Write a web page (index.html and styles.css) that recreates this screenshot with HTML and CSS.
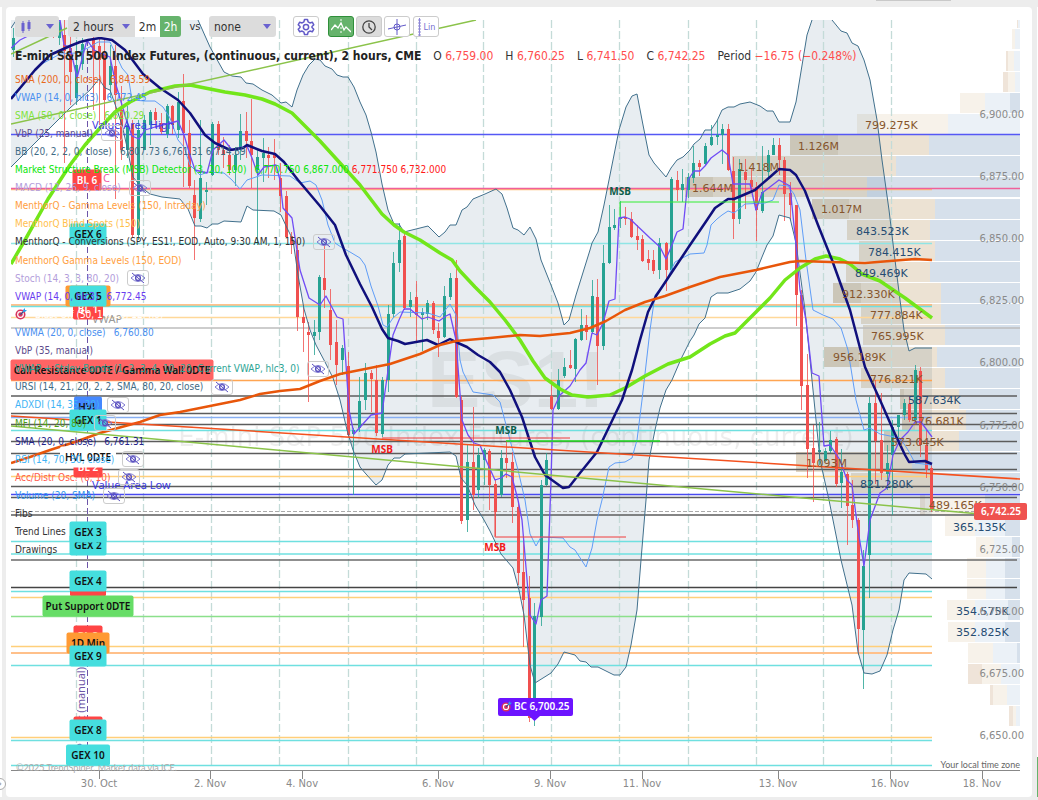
FILE: index.html
```
<!doctype html>
<html lang="en">
<head>
    <meta charset="utf-8" />
    <title>ES1! 2 hours</title>
    <link rel="stylesheet" href="styles.css">
    <script src="chart.js" defer></script>
</head>

<body>
    <svg class="defs" width="0" height="0" aria-hidden="true">
        <symbol id="eye-off" viewBox="0 0 16 12">
            <path d="M1 6Q8-1 15 6Q8 13 1 6Z" fill="none" stroke="#7d77cf" />
            <circle cx="8" cy="6" r="2.4" fill="none" stroke="#5a50c0" stroke-width="1.4" />
            <path d="M2 1L14 11" stroke="#5a50c0" />
        </symbol>
        <symbol id="target" viewBox="0 0 12 12">
            <circle cx="5.5" cy="6.5" r="5" fill="#d8345f" />
            <circle cx="5.5" cy="6.5" r="3.4" fill="#fff" />
            <circle cx="5.5" cy="6.5" r="2.2" fill="#d8345f" />
            <path d="M5.500 6.500L9 3" stroke="#33508a" stroke-width="1.200" />
            <path d="M8 4V2L10 0V2H12L10 4Z" fill="#2f9be8" />
        </symbol>
    </svg>

    <aside class="side side-left"><button class="expand" aria-label="Expand">›</button></aside>

    <main class="panel">
        <svg id="chart" class="chart" viewBox="6 7 1026 790" role="img" aria-label="ES1! price chart">
            <defs>
                <clipPath id="plot"><rect x="11" y="20" width="1009" height="750" /></clipPath>
            </defs>
        </svg>

        <div class="overlay">
            <div class="toolbar">
                <button class="gray style-btn" aria-label="Chart style">
                    <svg width="12" height="14" viewBox="0 0 12 14"><path d="M3 1V13M9 0V11" stroke="#6a62d0" /><path d="M3 3V11M9 2V9" stroke="#6a62d0" stroke-width="3" /></svg>
                    <span class="caret"></span>
                </button>
                <span class="pick pick-period">
                    <select aria-label="Period"><option>2 hours</option></select>
                    <span class="caret"></span>
                </span>
                <button class="quick">2m</button>
                <button class="quick on">2h</button>
                <label class="vs" for="versus">vs</label>
                <span class="pick pick-vs">
                    <select id="versus"><option>none</option></select>
                    <span class="caret"></span>
                </span>
                <button class="tool tool-gear" aria-label="Settings">
                    <svg width="18" height="18" viewBox="0 0 24 24" fill="none" stroke="#625ac8" stroke-width="2" stroke-linejoin="round"><path d="M10 2h4l.8 3.200 2.400 1.400 3.200-1 2 3.500-2.400 2.300v1.200l2.400 2.300-2 3.500-3.200-1-2.400 1.400L14 22h-4l-.8-3.200-2.400-1.400-3.200 1-2-3.500L4 12.600v-1.200L1.600 9.100l2-3.500 3.200 1 2.400-1.400Z" /><circle cx="12" cy="12" r="3.500" /></svg>
                </button>
                <button class="tool tool-wave" aria-label="Extended hours">
                    <svg width="20" height="18" viewBox="0 0 20 18" fill="none" stroke="#fff"><path d="M0 12L4 7L7 10L10 5L13 12L15 9L20 14" stroke-width="1.300" /><path d="M10 1V17" stroke-dasharray="2 2" /></svg>
                </button>
                <button class="tool tool-clock" aria-label="Time">
                    <svg width="16" height="16" viewBox="0 0 16 16" fill="none" stroke="#444" stroke-width="1.300"><circle cx="8" cy="8" r="6.200" /><path d="M8 4V8L11 11" /></svg>
                </button>
                <button class="tool tool-cross" aria-label="Crosshair">
                    <svg width="20" height="18" viewBox="0 0 20 18" fill="none" stroke="#625ac8"><path d="M10 1V17M1 11L19 7" /><circle cx="10" cy="9" r="3" /></svg>
                </button>
                <button class="tool tool-lin">
                    <svg width="5" height="18" viewBox="0 0 5 18" stroke="#8d87d6"><path d="M2.500 0V18M1 2H4M1 5H4M1 8H4M1 11H4M1 14H4M1 17H4" /></svg>Lin
                </button>
            </div>

            <h1 class="title">
                <b>E-mini S&amp;P 500 Index Futures, (continuous, current), 2 hours, CME</b>
                <span>O <i>6,759.00</i></span>
                <span>H <i>6,760.25</i></span>
                <span>L <i>6,741.50</i></span>
                <span>C <i>6,742.25</i></span>
                <span>Period <i>−16.75 (−0.248%)</i></span>
            </h1>

            <ul class="legend">
                <li class="c-rust">SMA (200, 0, close) <span>6,843.59</span></li>
                <li class="c-blue">VWAP (14, 0, hlc3) <span>6,772.45</span></li>
                <li class="c-lime">SMA (50, 0, close) <span>6,820.29</span></li>
                <li class="c-plum">VbP (25, manual) <button aria-label="Show"><svg><use href="#eye-off" /></svg></button></li>
                <li class="c-steel">BB (20, 2, 2, 0, close) <span>6,807.73 6,761.31 6,714.89</span></li>
                <li class="c-green">Market Structure Break (MSB) Detector (3, 20, 100) <span>6,770.750 6,867.000 <em>6,771.750 6,732.000</em></span></li>
                <li class="c-lilac">MACD (12, 26, 9, close) <button aria-label="Show"><svg><use href="#eye-off" /></svg></button></li>
                <li class="c-orange">MenthorQ - Gamma Levels (150, Intraday)</li>
                <li class="c-amber">MenthorQ Blind Spots (150)</li>
                <li>MenthorQ - Conversions (SPY, ES1!, EOD, Auto, 9:30 AM, 1, 150) <button aria-label="Show"><svg><use href="#eye-off" /></svg></button></li>
                <li class="c-orange">MenthorQ Gamma Levels (150, EOD)</li>
                <li class="c-lilac">Stoch (14, 3, 3, 80, 20) <button aria-label="Show"><svg><use href="#eye-off" /></svg></button></li>
                <li class="c-violet">VWAP (14, 0, hlc3) <span>6,772.45</span></li>
                <li class="c-white"><svg class="target"><use href="#target" /></svg> Blast Off (50, 14, 20, 12, no)</li>
                <li class="c-blue">VWMA (20, 0, close) <span>6,760.80</span></li>
                <li class="c-plum">VbP (35, manual)</li>
                <li class="c-teal">VWAP + Stdev Bands (1, 2, 3, 4, 10, 20, Current VWAP, hlc3, 0) <button aria-label="Show"><svg><use href="#eye-off" /></svg></button></li>
                <li class="c-steel">URSI (14, 21, 20, 2, 2, SMA, 80, 20, close) <button aria-label="Show"><svg><use href="#eye-off" /></svg></button></li>
                <li class="c-sky">ADXDI (14, 35, 20) <button aria-label="Show"><svg><use href="#eye-off" /></svg></button></li>
                <li class="c-moss">MFI (14, 20, 80) <button aria-label="Show"><svg><use href="#eye-off" /></svg></button></li>
                <li class="c-navy">SMA (20, 0, close) <span>6,761.31</span></li>
                <li class="c-sky">RSI (14, 70, 30, close) <button aria-label="Show"><svg><use href="#eye-off" /></svg></button></li>
                <li class="c-coral">Acc/Distr Osc. (6, 10) <button aria-label="Show"><svg><use href="#eye-off" /></svg></button></li>
                <li class="c-azure">Volume (20, SMA) <button aria-label="Show"><svg><use href="#eye-off" /></svg></button></li>
                <li>Fibs</li>
                <li>Trend Lines</li>
                <li>Drawings</li>
            </ul>
        </div>
    </main>

    <aside class="side side-right"></aside>
</body>

</html>
```

FILE: styles.css
```
* {
    box-sizing: border-box;
}
body {
    margin: 0;
    padding: 7px 0 3px;
    min-height: 100vh;
    display: flex;
    align-items: stretch;
    background: linear-gradient(#c9c9c9, #c9c9c9) 91% 0 / 75px 1px no-repeat #ededed;
    color: #333;
    font-family: "DejaVu Sans Condensed", "Noto Sans", sans-serif;
    font-size: 11px;
}
button, select {
    font: inherit;
    color: inherit;
    margin: 0;
    padding: 0;
    border: 0;
}
.defs {
    position: absolute;
}

.side {
    background: #fff;
}
.side-left {
    width: 2px;
    margin-right: 4px;
    display: flex;
    align-items: flex-end;
    justify-content: flex-end;
}
.side-right {
    width: 1px;
    margin-left: 5px;
    background: linear-gradient(#fff 95%, #66b36c 95%);
}
.expand {
    flex: none;
    width: 12px;
    height: 12px;
    margin: 0 -4px 7px 0;
    border: 1px solid #aaa;
    border-radius: 50%;
    background: #fff;
    color: #888;
    line-height: 8px;
}

.panel {
    flex: 1;
    min-width: 0;
    display: grid;
    align-items: start;
    background: #fff;
    border-radius: 4px;
}
.chart, .overlay {
    grid-area: 1 / 1;
    min-width: 0;
}
.chart {
    display: block;
    width: 100%;
}
.overlay {
    padding: 9px 9px 0;
}

/* toolbar */
.toolbar {
    display: flex;
    align-items: center;
    height: 21px;
    font-size: 12px;
}
.toolbar button, .pick {
    height: 21px;
    border-radius: 3px;
}
.toolbar .gray, .pick {
    display: flex;
    align-items: center;
    justify-content: space-between;
    background: #dcdcdc;
    padding: 0 5px;
}
.style-btn {
    width: 44px;
    margin-right: 9px;
}
.caret {
    border: 4px solid transparent;
    border-top: 5px solid #6a62d0;
    border-bottom: 0;
    pointer-events: none;
}
.pick select {
    appearance: none;
    background: none;
    flex: 1;
    min-width: 0;
    outline: 0;
}
.pick-period {
    width: 67px;
    border-radius: 3px 0 0 3px;
}
.pick-vs {
    width: 67px;
    margin-right: 17px;
}
.toolbar .quick {
    width: 25px;
    background: #fff;
    border-radius: 0;
}
.toolbar .quick.on {
    width: 21px;
    background: #66b36c;
    border-radius: 0 3px 3px 0;
    color: #fff;
}
.vs {
    width: 28px;
    text-align: center;
    font-size: 11px;
}
.tool {
    display: flex;
    align-items: center;
    justify-content: center;
    width: 26px;
    margin-right: 2px;
    background: #fff;
}
.toolbar .tool {
    border: 1px solid #ccc;
}
.tool-gear {
    margin-right: 9px;
}
.tool-cross {
    margin-right: 3px;
}
.toolbar .tool-wave {
    background: #66b36c;
    border-color: #2f8f3a;
}
.toolbar .tool-clock {
    background: #dcdcdc;
}
.toolbar .tool-lin {
    gap: 2px;
    color: #7770d0;
    font-size: 9px;
}

/* symbol and last bar */
.title {
    display: flex;
    gap: 12px;
    margin: 11px 0 6px;
    font-size: 12px;
    font-weight: 400;
    line-height: 16px;
    white-space: nowrap;
}
.title i {
    color: #ff4d4d;
    font-style: normal;
}
.title b {
    color: #222;
}

/* indicators */
.legend {
    display: flex;
    flex-direction: column;
    justify-content: space-between;
    min-height: 489px;
    margin: 0;
    padding: 0;
    list-style: none;
    font-size: 10px;
    white-space: nowrap;
}
.legend li {
    display: flex;
    align-items: center;
    gap: 8px;
    height: 18px;
}
.legend button {
    display: flex;
    align-items: center;
    justify-content: center;
    width: 22px;
    height: 16px;
    border: 1px solid #ccc;
    border-radius: 3px;
    background: none;
}
.legend button svg {
    width: 16px;
    height: 12px;
}
.legend .target {
    width: 12px;
    height: 12px;
}
.legend em {
    color: #ff1a1a;
    font-style: normal;
}
.c-rust { color: #e8691b; }
.c-blue { color: #4a8ff0; }
.c-lime { color: #7fe33a; }
.c-plum { color: #5d4b8c; }
.c-steel { color: #3f6b85; }
.c-green { color: #0be60b; }
.c-lilac { color: #b39ddb; }
.c-orange { color: #ff9e40; }
.c-amber { color: #ffc04d; }
.c-violet { color: #6a3cf0; }
.c-white { color: #fff; }
.c-teal { color: #2ba494; }
.c-sky { color: #3fb4f5; }
.c-moss { color: #4f9e12; }
.c-navy { color: #23238a; }
.c-coral { color: #ff5c4d; }
.c-azure { color: #2f95ee; }

/* chart text */
.chart text {
    font-family: "Noto Sans", sans-serif;
    font-size: 11px;
}
.chart .axis {
    font-family: "DejaVu Sans", sans-serif;
    font-size: 10px;
    fill: #8a8a8a;
}
.chart .volume {
    font-family: "DejaVu Sans", sans-serif;
}
.chart .credit {
    font-family: Lato, sans-serif;
    font-size: 9px;
    fill: #aaa;
}
.chart .zone {
    font-family: Lato, sans-serif;
    font-size: 9px;
    fill: #666;
}
.chart .badge {
    font-size: 10px;
    font-weight: 600;
}
.chart .msb {
    font-size: 10px;
    font-weight: 700;
}
.chart .mark-symbol {
    font-family: "Liberation Sans", sans-serif;
    font-size: 80px;
    font-weight: 700;
    fill: #000;
    fill-opacity: .06;
}
.chart .mark-name {
    font-family: "DejaVu Sans", sans-serif;
    font-size: 26px;
    fill: #000;
    fill-opacity: .07;
}
.band {
    fill: #e8edf1;
    mix-blend-mode: multiply;
}
```

FILE: chart.js
```
const svg = document.getElementById('chart');

function add(tag, attrs, parent, text) {
    const el = document.createElementNS('http://www.w3.org/2000/svg', tag);
    for (const k in attrs) el.setAttribute(k, attrs[k]);
    if (text !== undefined) el.textContent = text;
    (parent || svg).appendChild(el);
    return el;
}
const plot = add('g', { 'clip-path': 'url(#plot)' });

// volume by price: left, end of dark tan, tan/blue split, start of dark blue
const bins = [
    [1017, 1018, 1018, 1020], [1012, 1012, 1015, 1020], [1006, 1008, 1014, 1020], [1003, 1008, 1015, 1020],
    [960, 960, 985, 1010], [857, 857, 948, 1020], [790, 838, 929, 929], [732, 732, 896, 896],
    [685, 713, 867, 867], [812, 849, 935, 935], [847, 847, 930, 930], [859, 859, 935, 935],
    [846, 846, 930, 930], [833, 861, 941, 941], [861, 861, 941, 941], [863, 863, 945, 945],
    [824, 859, 937, 937], [861, 861, 945, 945], [900, 904, 959, 959], [902, 915, 966, 966],
    [884, 890, 959, 959], [796, 812, 912, 912], [851, 851, 932, 932], [920, 925, 985, 985],
    [945, 945, 975, 1005], [976, 976, 994, 1012], [967, 967, 986, 1005], [967, 967, 986, 1005],
    [947, 947, 975, 1008], [948, 948, 975, 1005], [968, 968, 993, 1017], [968, 982, 1001, 1020],
    [990, 993, 1007, 1020], [1009, 1013, 1016, 1020]
];
bins.forEach(([left, dark, split, blue], i) => {
    const y = Math.round(8.2 + 21.15 * i);
    const busy = i > 5 && i < 23;
    const bar = (x1, x2, fill) => x2 > x1 && add('rect', { x: x1, y, width: x2 - x1, height: 20, fill }, plot);
    bar(left, split, busy ? '#ece2d3' : '#f7f2ea');
    bar(left, dark, busy ? '#e0d5c3' : '#efe4d9');
    bar(split, blue, '#ebf1f7');
    bar(blue, 1020, '#d6e0eb');
});

const upper = '198,5 198,20 210,47 224,72 232,76 241,77 246,83 253,84 262,90 272,95 281,103 286,102 292,107 297,90 303,75 309,65 315,59 320,60 325,66 332,69 337,75 343,77 348,77 354,87 360,102 366,115 371,132 376,152 382,184 388,210 394,224 399,224 404,232 428,226 439,237 445,232 450,225 456,225 462,210 467,207 473,199 485,194 496,189 502,194 507,208 513,228 518,230 524,235 530,227 536,239 541,260 547,275 551,285 558,303 564,325 569,320 576,295 590,250 592,243 598,232 604,205 611,170 619,130 626,107 632,96 637,94 643,125 649,155 654,163 666,177 671,168 677,160 683,157 690,150 694,144 700,139 705,130 711,130 717,121 722,110 728,107 734,107 740,104 750,102 760,106 767,111 773,111 779,122 790,122 796,102 807,35 812,20 814,5 828,5 832,20 841,31 847,33 852,43 858,46 864,60 870,80 877,120 882,160 889,210 895,260 900,300 904,330 909,351 915,348 932,348';
const lower = '11,167 30,148 45,133 70,108 90,90 99,79 105,88 110,90 116,107 122,125 127,147 133,177 142,188 150,194 162,197 180,199 188,209 195,226 201,226 207,228 212,224 218,224 224,221 241,222 247,206 253,210 274,211 281,215 287,228 293,240 298,275 304,309 310,330 316,345 325,362 333,378 340,400 347,430 353,450 360,467 366,474 376,485 382,480 388,465 394,458 400,458 405,454 450,452 456,456 461,478 467,485 475,505 484,520 490,531 501,554 513,568 519,590 524,615 530,665 535,683 551,673 558,664 564,652 575,655 580,661 586,662 591,667 598,667 614,675 620,675 626,667 631,645 637,610 641,560 646,500 649,460 655,430 660,408 666,390 672,380 681,359 690,341 694,335 699,324 705,318 711,297 717,293 728,293 740,289 750,281 756,272 762,257 767,245 773,236 779,215 790,218 796,243 805,310 812,380 820,460 829,500 841,560 852,605 858,652 864,673 872,674 880,671 887,655 893,630 899,610 904,580 909,573 926,574 932,579';
add('polygon', { class: 'band', points: lower + ' ' + upper.split(' ').reverse().join(' ') + ' 11,5' }, plot);

add('text', { class: 'mark-symbol', x: 516, y: 407, 'text-anchor': 'middle' }, plot, 'ES1!');
add('text', { class: 'mark-name', x: 516, y: 446, 'text-anchor': 'middle' }, plot, 'E-mini S&P 500 Index Futures, (continuous, current)');

// session breaks
for (const x of [76, 143, 211, 279, 348, 416, 483, 551, 619, 688, 756, 823, 891]) {
    add('path', { d: `M${x + .5} 20V768`, stroke: '#c4dbd8', 'stroke-width': 1.3, 'stroke-dasharray': '8 3' }, plot);
}
add('path', { d: 'M87.5 40V768', stroke: '#6d55a8', 'stroke-dasharray': '6 3' }, plot);

// horizontal levels: y, colour, right end, width
const dark = '#5c5c5c', cyan = '#6fe0e0', sand = '#ffcf7a';
const levels = [
    [134.5, '#5558f5', 1020], [189.5, '#ffbe78', 932], [188.5, '#f0609a', 1020], [243.5, '#8fe5e5', 932], [305, '#ffae66', 932],
    [306.5, cyan, 932], [317.5, '#ffd899', 932], [328, '#bdbdbd', 1020], [380.5, '#ffa552', 932],
    [396, dark, 1017], [413.5, dark, 1017], [417.5, '#86aef2', 932], [424.5, dark, 1017], [430.5, cyan, 932],
    [441.5, dark, 1017], [453.5, dark, 1017], [469.5, dark, 1017], [476.5, sand, 932], [486.5, dark, 1017],
    [494.5, '#4a4af0', 1020], [497.5, dark, 1017], [515, dark, 1017], [541.5, cyan, 932], [554, cyan, 932],
    [560, '#6a6a6a', 1017], [587.5, '#444', 1017], [591.5, cyan, 932], [597.5, sand, 932], [616.5, '#8be08b', 932],
    [646.5, sand, 932], [653, '#ffc08a', 932, 2], [665.5, cyan, 932], [737.5, sand, 932], [740.5, cyan, 932], [765.5, cyan, 932]
];
for (const [y, stroke, x2, w] of levels) {
    add('path', { d: `M11 ${y}H${x2}`, stroke, 'stroke-width': w || 1.3 }, plot);
}
add('path', { d: 'M11 511.5H980', stroke: '#aaa', 'stroke-dasharray': '4 2' }, plot);

// candles: x, high, body top, body bottom, low, up
const candles = [
    [13, 28, 38, 50, 57, 1], [53, 20, 24, 35, 38, 0], [59, 20, 22, 38, 45, 1], [64, 20, 35, 51, 163, 0], [70, 30, 48, 72, 105, 0],
    [76, 40, 65, 98, 105, 1], [82, 38, 44, 64, 70, 1], [93, 32, 40, 57, 110, 0], [99, 38, 46, 60, 125, 0],
    [104, 40, 55, 100, 120, 0], [110, 45, 66, 85, 98, 1], [115, 45, 66, 95, 199, 0], [121, 86, 110, 150, 160, 0],
    [127, 106, 125, 150, 158, 1], [132, 120, 124, 235, 238, 0], [138, 120, 130, 235, 240, 1], [144, 115, 120, 150, 150, 1],
    [150, 110, 112, 125, 145, 1], [155, 108, 112, 120, 128, 0], [161, 113, 123, 132, 134, 0], [167, 104, 106, 134, 138, 1],
    [172, 105, 106, 125, 134, 0], [178, 92, 102, 130, 138, 1], [183, 74, 101, 133, 187, 0], [189, 120, 133, 186, 188, 0],
    [194, 180, 195, 218, 260, 0], [200, 120, 178, 219, 222, 1], [206, 182, 190, 192, 205, 1], [212, 122, 124, 175, 176, 1],
    [218, 121, 124, 150, 155, 0], [223, 137, 150, 155, 168, 0], [229, 145, 155, 170, 175, 0], [235, 147, 155, 170, 186, 1],
    [240, 114, 131, 148, 160, 1], [246, 112, 131, 141, 158, 0], [251, 99, 141, 155, 188, 0], [257, 150, 157, 170, 245, 1],
    [263, 138, 153, 158, 182, 1], [268, 147, 155, 158, 178, 0], [274, 139, 153, 158, 180, 0], [280, 163, 178, 196, 212, 0],
    [286, 191, 196, 237, 238, 0], [291, 232, 236, 245, 254, 0], [297, 240, 250, 317, 331, 0], [303, 305, 317, 323, 352, 0],
    [308, 322, 332, 335, 402, 0], [314, 320, 332, 336, 355, 1], [319, 275, 277, 332, 340, 1], [324, 246, 278, 290, 308, 0],
    [330, 289, 310, 345, 360, 0], [336, 320, 342, 365, 385, 0], [342, 345, 348, 360, 375, 1], [348, 352, 366, 435, 437, 0],
    [353, 428, 430, 434, 495, 1], [359, 377, 401, 428, 432, 1], [365, 363, 373, 400, 410, 1], [371, 370, 373, 379, 412, 0],
    [376, 365, 380, 433, 436, 0], [382, 377, 380, 434, 437, 1], [388, 305, 314, 380, 392, 1], [393, 252, 263, 314, 318, 1],
    [399, 223, 240, 263, 272, 1], [404, 232, 236, 308, 310, 0], [410, 292, 300, 307, 317, 1], [416, 281, 297, 315, 342, 0],
    [422, 308, 312, 315, 351, 1], [427, 300, 303, 314, 320, 1], [433, 301, 303, 330, 334, 0], [438, 323, 331, 338, 357, 0],
    [444, 286, 296, 337, 338, 1], [450, 273, 278, 297, 300, 1], [456, 260, 278, 397, 398, 0], [461, 396, 400, 521, 524, 0],
    [467, 445, 462, 520, 532, 1], [473, 407, 462, 495, 510, 0], [478, 448, 455, 490, 498, 1], [484, 448, 450, 460, 485, 1],
    [489, 449, 451, 485, 510, 0], [495, 480, 484, 512, 536, 0], [501, 450, 458, 495, 497, 1], [506, 441, 458, 463, 478, 0],
    [512, 452, 462, 507, 523, 0], [518, 503, 507, 573, 585, 0], [523, 540, 572, 600, 647, 0], [529, 576, 598, 718, 722, 0],
    [534, 603, 616, 715, 726, 1], [541, 480, 485, 617, 626, 1], [546, 453, 460, 485, 486, 1], [551, 380, 396, 409, 410, 0],
    [558, 369, 380, 409, 410, 1], [564, 358, 367, 376, 378, 1], [570, 350, 365, 368, 369, 0], [575, 338, 339, 369, 382, 1],
    [581, 309, 325, 340, 341, 1], [586, 315, 325, 332, 340, 0], [592, 280, 296, 332, 333, 1], [597, 279, 297, 346, 385, 0],
    [603, 245, 263, 346, 350, 1], [609, 205, 227, 263, 264, 1], [614, 209, 225, 228, 230, 1], [620, 201, 217, 219, 228, 1],
    [625, 207, 217, 219, 225, 0], [631, 212, 219, 237, 238, 0], [637, 225, 236, 240, 250, 0], [642, 235, 239, 261, 262, 0],
    [648, 250, 259, 263, 270, 0], [653, 250, 260, 271, 274, 0], [659, 238, 243, 270, 279, 1], [666, 242, 243, 270, 291, 0],
    [671, 177, 179, 270, 272, 1], [677, 171, 180, 190, 201, 0], [682, 169, 184, 190, 202, 1], [688, 173, 177, 190, 198, 1],
    [693, 146, 163, 178, 183, 1], [699, 160, 163, 167, 176, 0], [705, 143, 146, 164, 165, 1], [711, 125, 137, 145, 146, 1],
    [717, 120, 135, 137, 145, 1], [722, 124, 129, 135, 164, 1], [728, 124, 129, 170, 171, 0], [733, 157, 171, 219, 239, 0],
    [739, 159, 169, 219, 224, 1], [745, 159, 172, 180, 209, 0], [751, 168, 180, 187, 190, 0], [756, 182, 187, 210, 241, 0],
    [762, 146, 192, 211, 213, 1], [768, 150, 155, 172, 177, 1], [773, 138, 145, 155, 155, 1], [779, 138, 145, 160, 175, 0],
    [784, 157, 160, 194, 221, 0], [790, 182, 193, 205, 220, 0], [796, 205, 205, 295, 326, 0], [801, 290, 295, 386, 410, 0],
    [807, 354, 385, 449, 478, 0], [813, 425, 448, 463, 502, 0], [819, 422, 450, 452, 465, 1], [825, 448, 451, 461, 462, 1],
    [830, 431, 440, 451, 453, 1], [836, 437, 439, 484, 487, 0], [841, 449, 472, 483, 508, 1], [847, 472, 474, 506, 545, 0],
    [852, 480, 505, 520, 528, 0], [858, 518, 520, 629, 655, 0], [863, 550, 566, 630, 689, 1], [869, 397, 403, 555, 598, 1],
    [875, 380, 403, 441, 484, 0], [881, 393, 440, 473, 480, 0], [887, 445, 463, 474, 490, 1], [892, 420, 427, 455, 515, 1],
    [898, 415, 415, 427, 440, 1], [904, 399, 403, 415, 420, 1], [909, 397, 404, 420, 422, 0], [915, 365, 370, 420, 422, 1],
    [920, 367, 371, 445, 457, 0], [926, 430, 445, 470, 478, 0], [931, 465, 468, 510, 512, 0]
];
for (const [x, high, top, bottom, low, up] of candles) {
    const stroke = up ? '#26a292' : '#f0504f';
    add('path', { d: `M${x + .5} ${high}V${low}`, stroke, 'stroke-opacity': .8 }, plot);
    add('path', { d: `M${x + .5} ${top}V${bottom}`, stroke, 'stroke-width': 3 }, plot);
}

// indicator lines
const lines = [
    [upper, '#41708c', 1],
    [lower, '#41708c', 1],
    ['11,28 15,22 18,18', '#41708c', 1],
    ['11,97 25,82 40,65 60,54 76,53 88,48 98,42 110,42 116,55 122,68 128,75 132,100 145,101 155,101 163,107 170,118 178,140 184,147 190,165 200,175 208,172 224,173 232,180 240,189 247,180 262,175 290,176 300,183 310,181 316,185 322,200 328,225 335,243 341,247 350,252 360,258 365,265 371,286 378,306 383,325 387,327 393,318 400,312 428,313 440,317 450,304 456,315 460,360 463,372 473,392 493,395 500,402 510,440 518,470 525,500 530,534 536,546 541,537 563,538 570,547 575,550 586,567 592,548 597,520 602,500 609,467 615,463 625,462 632,458 637,440 642,400 650,330 655,295 665,283 675,262 690,254 704,253 707,245 711,225 717,219 722,215 728,211 734,213 745,204 765,203 773,200 779,185 788,186 794,194 800,210 806,260 813,310 823,315 833,319 841,328 848,350 856,400 864,430 870,428 880,434 900,438 908,450 915,463 932,465', '#5f9df7', 1],
    ['11,48 20,40 60,20 64,45 70,47 77,78 87,40 94,50 100,53 110,57 116,85 122,105 127,122 132,136 139,139 145,130 155,127 178,121 184,135 190,155 195,170 207,173 213,150 224,140 232,150 247,146 252,158 258,175 264,167 276,165 280,180 283,208 292,218 300,270 309,298 320,305 326,296 337,317 343,319 349,410 354,434 362,425 371,415 382,413 393,335 399,320 404,309 410,309 422,319 428,317 439,321 446,316 450,314 456,340 462,420 468,435 474,443 480,445 485,458 495,480 501,478 506,474 512,477 518,500 522,520 530,615 536,624 541,600 547,596 551,480 553,410 560,395 570,386 580,370 586,363 592,333 597,335 603,323 609,301 615,299 619,218 625,217 630,219 650,238 660,247 666,259 672,245 677,232 683,229 688,180 694,171 700,171 705,166 711,158 722,150 728,155 733,184 750,184 756,210 762,193 779,180 790,186 796,245 800,290 806,320 812,373 819,376 824,446 830,445 840,460 847,480 852,485 858,530 864,566 870,520 880,493 887,488 893,455 900,440 908,432 915,422 921,422 932,437', '#704cf5', 1.3],
    ['11,264 25,240 48,199 70,165 85,145 100,128 115,112 130,102 150,92 175,86 190,85 205,88 225,92 245,95 262,99 275,104 292,113 305,126 320,141 340,163 360,185 382,214 394,225 404,232 420,240 440,253 452,260 460,271 475,287 490,302 505,320 520,340 533,361 545,378 560,389 572,395 588,397 610,395 625,388 645,376 668,364 690,357 710,344 725,336 735,333 750,318 770,298 785,280 800,268 815,259 826,256 840,259 850,264 862,274 880,281 905,298 932,318', '#72e61a', 3.5],
    ['11,99 35,70 50,55 70,46 80,42 88,40 100,38 112,40 125,50 143,74 160,88 178,100 190,113 205,135 215,143 230,150 243,148 247,145 262,151 275,154 284,162 298,180 320,206 335,225 346,255 360,284 372,307 382,329 388,338 398,341 405,344 427,340 438,345 450,339 458,343 467,347 478,355 490,362 500,372 510,390 522,417 535,457 545,475 563,488 569,487 580,473 597,452 610,425 622,400 632,370 640,340 648,312 656,296 668,278 690,245 707,220 715,208 728,199 734,199 755,190 770,177 779,169 790,170 796,175 805,191 818,225 832,260 850,310 865,367 880,400 895,434 905,455 909,462 925,461 932,464', '#10107c', 2.5],
    ['11,463 30,457 50,450 75,442 100,433 118,428 140,422 160,415 180,412 210,406 240,400 260,394 280,391 300,389 320,381 340,374 390,364 420,354 440,345 456,341 490,338 520,335 540,336 570,333 590,328 606,321 625,310 645,302 665,296 690,287 720,277 756,270 790,262 800,261 830,262 865,263 890,261 915,259 932,260', '#e8560a', 2.5],
    ['11,54 67,28', '#8bc34a', 1.5],
    ['11,124 476,20', '#8bc34a', 1.5],
    ['11,416 1020,479', '#f4511e', 1.5],
    ['11,426 980,514', '#8bc34a', 1.5],
    ['620,217 620,202 779,202', '#33ee33', 1],
    ['506,441 660,441', '#22e022', 1.5],
    ['382,438 570,438', '#f03c3c', 1],
    ['495,512 495,537 626,537', '#f03c3c', 1]
];
for (const [points, stroke, w] of lines) {
    add('polyline', { points, stroke, 'stroke-width': w, fill: 'none', 'stroke-linejoin': 'round' }, plot);
}

// volume labels: x, bin, text
const brown = '#86552c', ink = '#264c73';
const volumes = [
    [865, 5, '799.275K', brown], [798, 6, '1.126M', brown], [738, 7, '1.418M', brown], [692, 8, '1.644M', brown],
    [821, 9, '1.017M', brown], [856, 10, '843.523K', ink], [868, 11, '784.415K', ink], [855, 12, '849.469K', ink],
    [842, 13, '912.330K', brown], [870, 14, '777.884K', brown], [871, 15, '765.995K', brown], [833, 16, '956.189K', brown],
    [870, 17, '776.821K', brown], [908, 18, '587.634K', ink], [911, 19, '576.681K', brown], [891, 20, '573.045K', brown],
    [806, 21, '1.093M', brown], [860, 22, '821.280K', ink], [929, 23, '489.165K', brown], [953, 24, '365.135K', ink],
    [956, 28, '354.575K', ink], [956, 29, '352.825K', ink]
];
for (const [x, bin, text, fill] of volumes) {
    add('text', { class: 'volume', x, y: Math.round(23 + 21.15 * bin), fill }, svg, text);
}

// axes
add('path', { d: 'M11 770.5H1020', stroke: '#888' });
const days = { 99: '30. Oct', 210: '2. Nov', 302: '4. Nov', 438: '6. Nov', 550: '9. Nov', 642: '11. Nov', 778: '13. Nov', 890: '16. Nov', 982: '18. Nov' };
for (const x in days) {
    add('path', { d: `M${+x + .5} 770V779`, stroke: '#888' });
    add('text', { class: 'axis', x, y: 787, 'text-anchor': 'middle' }, svg, days[x]);
}
for (let i = 0; i < 11; i++) {
    const price = (6900 - 25 * i).toLocaleString('en-US') + '.00';
    add('text', { class: 'axis', x: 1024, y: 118 + Math.round(62.1 * i), 'text-anchor': 'end' }, svg, price);
}
add('text', { class: 'zone', x: 1020, y: 768, 'text-anchor': 'end' }, svg, 'Your local time zone');
add('text', { class: 'credit', x: 16, y: 771 }, svg, '©2025 TrendSpider. Market data via ICE.');

// notes on the plot
add('text', { x: 92, y: 129, fill: '#3a3ae0' }, svg, 'Value Area High');
add('text', { x: 92, y: 489, fill: '#3a3ae0' }, svg, 'Value Area Low');
add('text', { x: 92, y: 323, fill: '#999' }, svg, 'VWAP');
add('text', { x: 103, y: 182, fill: '#ee5fa8' }, svg, 'C');
add('text', { transform: 'translate(85 667) rotate(-90)', 'text-anchor': 'end', fill: '#6d55a8' }, svg, 'VbP Start (manual)');
for (const [x, y, fill] of [[620, 195, '#0b5d4a'], [506, 434, '#0b5d4a'], [382, 453, '#f01818'], [495, 551, '#f01818']]) {
    add('text', { class: 'msb', x, y, fill, 'text-anchor': 'middle' }, svg, 'MSB');
}

// level badges: text, centre x, centre y, width, fill, text colour
const teal = '#45dede', red = '#ff4545', orange = '#ff9a33';
const badges = [
    ['BL 6', 87, 180, 29, red, '#fff'],
    ['GEX 6', 88, 234, 37, teal],
    ['BL 1', 88, 309, 30, red, '#fff'],
    ['', 88, 296, 45, orange],
    ['GEX 5', 88, 296, 37, teal],
    ['Call Resistance 0DTE / Gamma Wall 0DTE', 112, 370, 203, '#ff6464'],
    ['HVL', 88, 407, 28, '#4488ff'],
    ['GEX 1', 88, 420, 37, teal],
    ['BL 2', 88, 467, 29, red, '#fff'],
    ['HVL 0DTE', 88, 457, 56, '#fff'],
    ['GEX 2', 88, 545, 37, teal],
    ['GEX 3', 88, 532, 37, teal],
    ['', 88, 586, 36, red],
    ['GEX 4', 88, 581, 37, teal],
    ['Put Support 0DTE', 88, 606, 91, '#66dd66'],
    ['BL 3', 88, 636, 29, red, '#fff'],
    ['1D Min', 88, 643, 43, orange],
    ['GEX 9', 88, 656, 37, teal],
    ['', 88, 727, 29, red],
    ['GEX 8', 88, 730, 37, teal],
    ['GEX 10', 88, 755, 44, teal]
];
for (const [text, x, y, w, fill, color] of badges) {
    add('rect', { x: x - w / 2, y: y - 10.5, width: w, height: 21, rx: 2, fill });
    add('text', { class: 'badge', x, y: y + 4, 'text-anchor': 'middle', fill: color || '#111' }, svg, text);
}

// last signal and last price
add('path', { d: 'M500 698H571Q573 698 573 700V714Q573 716 571 716H540L534.500 721L529 716H500Q498 716 498 714V700Q498 698 500 698Z', fill: '#6c14ff' });
add('use', { href: '#target', x: 501, y: 701, width: 11, height: 11 });
add('text', { class: 'badge', x: 514, y: 710, fill: '#fff' }, svg, 'BC 6,700.25');
add('rect', { x: 974, y: 503, width: 53, height: 17, rx: 2, fill: '#ef5350' });
add('text', { class: 'badge', x: 1001, y: 515, 'text-anchor': 'middle', fill: '#fff' }, svg, '6,742.25');
```
